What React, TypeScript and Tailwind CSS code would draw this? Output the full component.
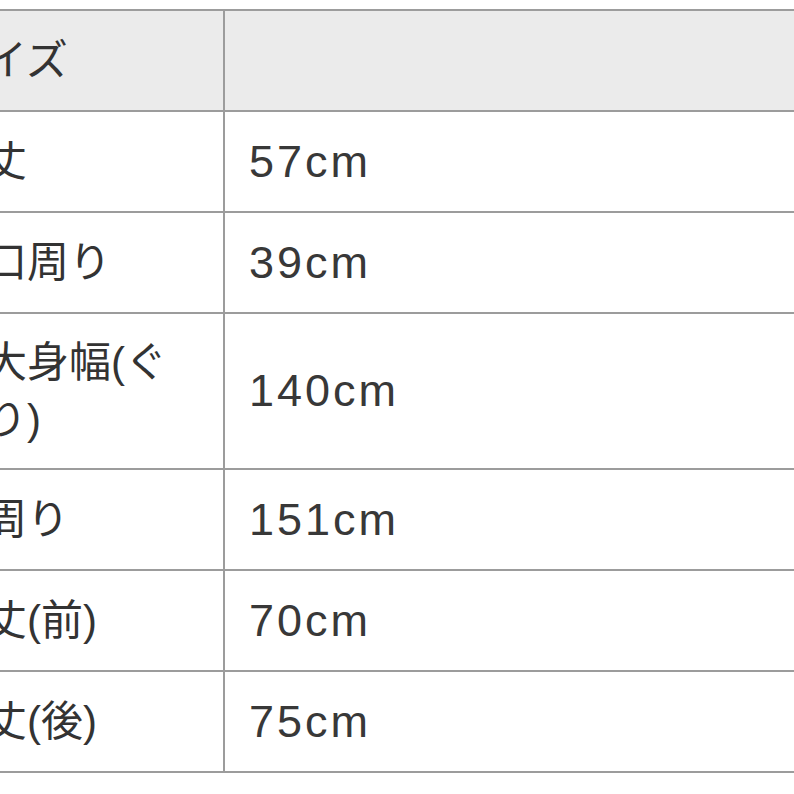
const rows: { label: React.ReactNode; value: string; tall?: boolean }[] = [
  { label: '着丈', value: '57cm' },
  { label: '袖口周り', value: '39cm' },
  {
    label: (
      <>
        最大身幅(ぐ
        <br />
        るり)
      </>
    ),
    value: '140cm',
    tall: true,
  },
  { label: '裾周り', value: '151cm' },
  { label: '着丈(前)', value: '70cm' },
  { label: '着丈(後)', value: '75cm' },
];

const labelFont = "[font-family:'Liberation_Sans','Noto_Sans_CJK_JP',sans-serif]";

export default function App() {
  return (
    <div className="w-[794px] h-[794px] overflow-hidden bg-white pt-[9px]">
      {/* table is cropped on the left, like the screenshot */}
      <div className="ml-[-81px] w-[1000px] grid grid-cols-[306px_1fr] border-t-2 border-[#9c9c9c] text-[#333]">
        <div
          className={`h-[101px] flex items-center pl-6 bg-[#ebebeb] border-b-2 border-r-2 border-[#9c9c9c] text-[42px] ${labelFont}`}
        >
          サイズ
        </div>
        <div className="h-[101px] bg-[#ebebeb] border-b-2 border-[#9c9c9c]" />

        {rows.map((r, i) => (
          <div key={i} className="contents">
            <div
              className={`${r.tall ? 'h-[156px]' : 'h-[101px]'} flex items-center pl-6 pr-6 border-b-2 border-r-2 border-[#9c9c9c] text-[42px] leading-[57px] ${labelFont}`}
            >
              <span>{r.label}</span>
            </div>
            <div
              className={`${r.tall ? 'h-[156px]' : 'h-[101px]'} flex items-center pl-6 border-b-2 border-[#9c9c9c] text-[45px] tracking-[3px] text-[#383838] font-['Liberation_Sans',sans-serif]`}
            >
              {r.value}
            </div>
          </div>
        ))}
      </div>
    </div>
  );
}
